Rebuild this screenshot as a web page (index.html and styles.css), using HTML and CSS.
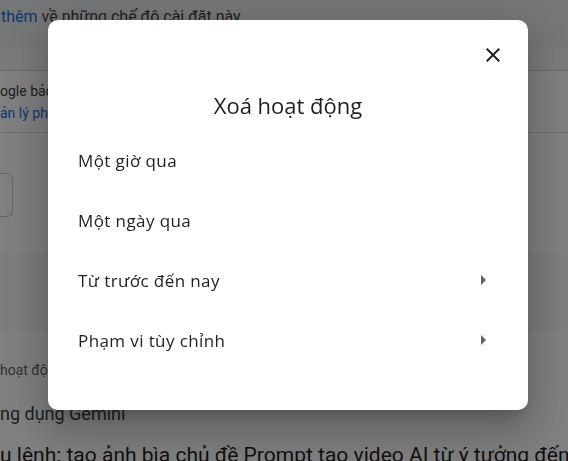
FILE: index.html
```html
<!DOCTYPE html>
<html>
<head>
	<meta charset="utf-8">
	<title>Xoá hoạt động</title>
	<link rel="stylesheet" href="styles.css">
</head>
<body>
<div class="page">
	<div class="topnote"><a class="link">thêm</a> về những chế độ cài đặt này</div>
	<div class="section">
		<div class="line">ogle bảo vệ dữ liệu của bạn</div>
		<div class="line link">ản lý phiên bản</div>
	</div>
	<div class="filter">
		<div class="filterbox"></div>
	</div>
	<div class="band"></div>
	<div class="meta">hoạt động</div>
	<div class="appname">ng dụng Gemini</div>
	<div class="prompt">u lệnh: tạo ảnh bìa chủ đề Prompt tạo video AI từ ý tưởng đến</div>
</div>

<div class="scrim">
	<div class="dialog">
		<button class="close" aria-label="Đóng">
			<svg width="24" height="24" viewBox="0 0 24 24"><path d="M19 6.41L17.59 5 12 10.59 6.41 5 5 6.41 10.59 12 5 17.59 6.41 19 12 13.41 17.59 19 19 17.59 13.41 12z" fill="#202124"/></svg>
		</button>
		<h1 class="title">Xoá hoạt động</h1>
		<ul class="options">
			<li class="option">Một giờ qua</li>
			<li class="option">Một ngày qua</li>
			<li class="option">Từ trước đến nay
				<svg width="24" height="24" viewBox="0 0 24 24"><path d="M10 17l5-5-5-5v10z" fill="#5f6368"/></svg>
			</li>
			<li class="option">Phạm vi tùy chỉnh
				<svg width="24" height="24" viewBox="0 0 24 24"><path d="M10 17l5-5-5-5v10z" fill="#5f6368"/></svg>
			</li>
		</ul>
	</div>
</div>
</body>
</html>
```

FILE: styles.css
```css
body {
	margin: 0;
	font-family: Roboto, "Noto Sans", sans-serif;
	color: #202124;
	background: #fff;
	overflow: hidden;
	height: 461px;
}

.link {
	color: #1a6fd8;
}

.topnote {
	height: 70px;
	padding: 5px 0 0 1px;
	box-sizing: border-box;
	font-size: 16px;
	line-height: 24px;
	color: #3c4043;
	background: linear-gradient(#ebecf1 0, #ebecf1 44px, #f5f5f6 52px);
}

.section {
	border-top: 1px solid #d8d8d8;
	border-bottom: 1px solid #d8d8d8;
	padding: 9px 0 8px;
	font-size: 14px;
	line-height: 22px;
	color: #3c4043;
}

.filter {
	padding: 40px 0 12px;
}

.filterbox {
	width: 12px;
	height: 42px;
	border: 1px solid #c6c6c6;
	border-left: 0;
	border-radius: 0 6px 6px 0;
}

.band {
	height: 76px;
	margin-top: 25px;
	background: #f8f8f8;
}

.meta {
	margin-top: 30px;
	font-size: 14px;
	line-height: 20px;
	color: #5f6368;
}

.appname {
	margin-top: 21px;
	font-size: 18px;
	line-height: 26px;
	color: #3c4043;
}

.prompt {
	margin-top: 14px;
	font-size: 21px;
	line-height: 28px;
	color: #1f1f1f;
	white-space: nowrap;
}

.scrim {
	position: fixed;
	inset: 0;
	background: rgba(0, 0, 0, 0.5);
	padding: 20px 0 0 48px;
}

.dialog {
	position: relative;
	width: 480px;
	height: 390px;
	background: #fff;
	border-radius: 10px;
	box-shadow: 0 11px 15px -7px rgba(0,0,0,.2), 0 24px 38px 3px rgba(0,0,0,.14), 0 9px 46px 8px rgba(0,0,0,.12);
	font-family: "Open Sans", Roboto, sans-serif;
}

.close {
	position: absolute;
	top: 23px;
	right: 23px;
	width: 24px;
	height: 24px;
	padding: 0;
	border: 0;
	background: none;
}

.title {
	margin: 0 0 11px;
	padding-top: 71px;
	font-size: 22px;
	line-height: 28px;
	font-weight: 400;
	text-align: center;
	color: #1f1f1f;
}

.options {
	list-style: none;
	margin: 0;
	padding: 0 33px 0 30px;
}

.option {
	height: 60px;
	display: flex;
	align-items: center;
	justify-content: space-between;
	font-size: 17px;
	letter-spacing: 0.4px;
	color: #1f1f1f;
}
```
